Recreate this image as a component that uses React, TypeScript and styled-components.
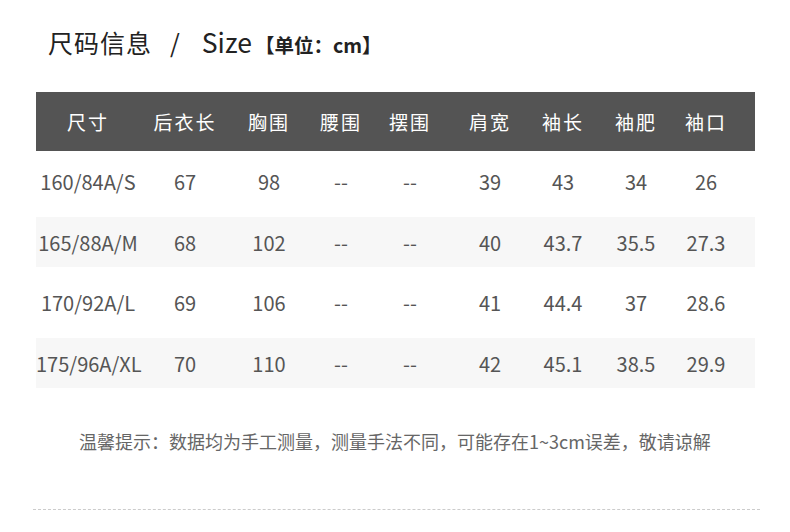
import React from 'react';
import styled, { createGlobalStyle } from 'styled-components';

const GlobalStyle = createGlobalStyle`
  html, body {
    margin: 0;
    padding: 0;
    background: #fff;
  }
  body {
    font-family: "Noto Sans CJK SC", "Noto Sans", sans-serif;
  }
`;

const Page = styled.div`
  width: 790px;
  height: 532px;
  box-sizing: border-box;
  padding: 22px 0 0 36px;
  overflow: hidden;
`;

const Title = styled.div`
  display: flex;
  align-items: baseline;
  height: 40px;
  padding-left: 12px;
  color: #222;
`;

const TitleCn = styled.span`
  font-size: 25px;
  letter-spacing: 1px;
`;

const Slash = styled.span`
  font-size: 25px;
  margin: 0 22px 0 18px;
`;

const TitleEn = styled.span`
  font-size: 26.5px;
`;

const Unit = styled.span`
  font-size: 19.5px;
  font-weight: bold;
  margin-left: 3px;
`;

const Table = styled.div`
  margin-top: 30px;
  width: 719px;
`;

const cols = '104px 90px 78px 66px 72px 88px 58px 88px 52px';

const HeadRow = styled.div`
  display: grid;
  grid-template-columns: ${cols};
  height: 59px;
  align-items: center;
  background: #545454;
  color: #fff;
  font-size: 19px;
  letter-spacing: 2px;
`;

const Row = styled.div<{ $shaded: boolean }>`
  display: grid;
  grid-template-columns: ${cols};
  height: 50px;
  margin: ${(p) => (p.$shaded ? '6px 0 5px' : '0')};
  padding: ${(p) => (p.$shaded ? '0' : '5px 0')};
  align-items: center;
  background: ${(p) => (p.$shaded ? '#f7f7f7' : '#fff')};
  color: #555;
  font-size: 20px;
  &:first-of-type {
    padding-top: 6px;
  }
`;

const Cell = styled.div`
  text-align: center;
  white-space: nowrap;
`;

const Note = styled.div`
  margin-top: 40px;
  padding-left: 43px;
  font-size: 18px;
  color: #666;
`;

const Dashed = styled.div`
  margin: 55px 0 0 -3px;
  width: 727px;
  border-top: 1px dashed #ccc;
`;

const headers = ['尺寸', '后衣长', '胸围', '腰围', '摆围', '肩宽', '袖长', '袖肥', '袖口'];

const rows = [
  ['160/84A/S', '67', '98', '--', '--', '39', '43', '34', '26'],
  ['165/88A/M', '68', '102', '--', '--', '40', '43.7', '35.5', '27.3'],
  ['170/92A/L', '69', '106', '--', '--', '41', '44.4', '37', '28.6'],
  ['175/96A/XL', '70', '110', '--', '--', '42', '45.1', '38.5', '29.9'],
];

const App = () => {
  return (
    <Page>
      <GlobalStyle />
      <Title>
        <TitleCn>尺码信息</TitleCn>
        <Slash>/</Slash>
        <TitleEn>Size</TitleEn>
        <Unit>【单位：cm】</Unit>
      </Title>
      <Table>
        <HeadRow>
          {headers.map((h) => (
            <Cell key={h}>{h}</Cell>
          ))}
        </HeadRow>
        {rows.map((r, i) => (
          <Row key={r[0]} $shaded={i % 2 === 1}>
            {r.map((c, j) => (
              <Cell key={j}>{c}</Cell>
            ))}
          </Row>
        ))}
      </Table>
      <Note>温馨提示：数据均为手工测量，测量手法不同，可能存在1~3cm误差，敬请谅解</Note>
      <Dashed />
    </Page>
  );
};

export default App;
